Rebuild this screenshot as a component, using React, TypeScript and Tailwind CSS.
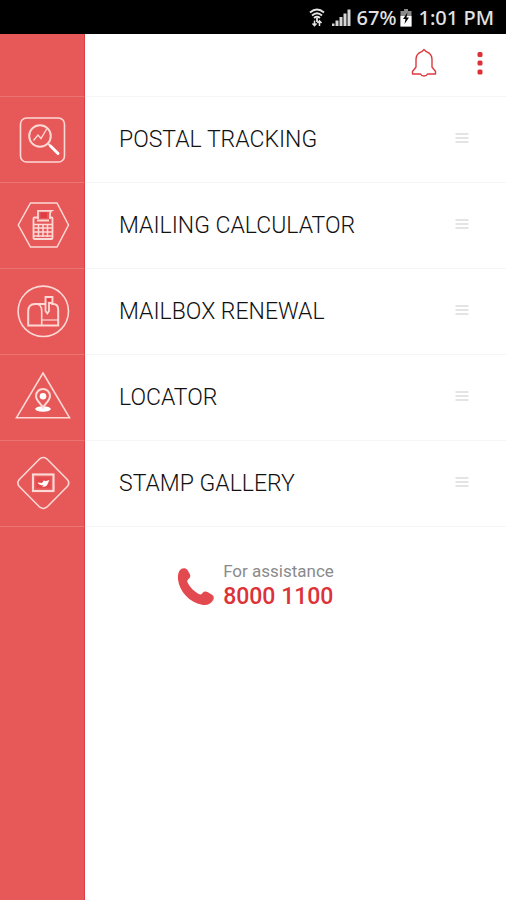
import React from 'react';

const TrackingIcon = () => (
  <svg viewBox="0 0 64 64" className="w-16 h-16" fill="none" stroke="#fdd9d6" strokeWidth="1.6" aria-hidden="true">
    <rect x="10.5" y="10" width="44" height="44" rx="6" />
    <circle cx="30" cy="28" r="10.8" strokeWidth="2" />
    <path d="M23.5 32.5l4.5-5.5 3 3.5 6-10" strokeWidth="1.4" />
    <path d="M38 35.5l2.5 2.5" strokeWidth="2" />
    <path d="M40.5 38l7.5 7.5" stroke="#fff" strokeWidth="3" strokeLinecap="round" />
  </svg>
);

const CalculatorIcon = () => (
  <svg viewBox="0 0 64 64" className="w-16 h-16" fill="none" stroke="#fdd9d6" strokeWidth="1.5" aria-hidden="true">
    <path d="M20.5 9h26.5L58.5 31 47 53H20.5L8.3 31z" />
    <path d="M28 25v-8.2h13.5c-1.5 1-1.5 2.6-1.5 4V25" strokeWidth="1.8" />
    <path d="M30.5 18.5H37V24h-6.5z" fill="#e03c42" stroke="none" />
    <path d="M28 23.5h-3.5q-1 0-1 1V44q0 1 1 1h17q1 0 1-1V24.5q0-1-1-1H40" strokeWidth="1.8" />
    <path d="M27 26.5h12" strokeWidth="2" />
    <path d="M24 30.5h18M24 34h18M24 38h18M24 42h18" />
    <path d="M28.5 30v13M33 30v13M37.5 30v13" />
  </svg>
);

const MailboxIcon = () => (
  <svg viewBox="0 0 64 64" className="w-16 h-16" fill="none" stroke="#fdd9d6" strokeWidth="1.6" aria-hidden="true">
    <circle cx="33.3" cy="31.3" r="25.2" />
    <path d="M35 24H25c-4.5 0-6.8 3-6.8 7v14.5h30V30c0-3.5-1.5-6-5-6h-2" strokeWidth="2" />
    <path d="M26 24c4 0 5.7 3 5.7 7v14" />
    <path d="M32 40h16" strokeWidth="1.2" />
    <path d="M35.5 31V17h7v6H39v8l-1.7 2.5z" strokeWidth="1.8" />
    <path d="M37 18.5h4V21h-4z" fill="#e03c42" stroke="none" />
  </svg>
);

const LocatorIcon = () => (
  <svg viewBox="0 0 64 64" className="w-16 h-16" fill="none" stroke="#fdd9d6" strokeWidth="1.6" aria-hidden="true">
    <path d="M33 7l26.5 44.7h-53z" />
    <ellipse cx="33" cy="43" rx="7.8" ry="2.8" fill="#fff" stroke="none" />
    <path d="M33 41.5c-2-4-7-6.8-7-11.5a7 7 0 0 1 14 0c0 4.7-5 7.5-7 11.5z" fill="#e75858" strokeWidth="2" />
    <circle cx="33" cy="30.3" r="3.3" fill="#fff" stroke="none" />
  </svg>
);

const StampIcon = () => (
  <svg viewBox="0 0 64 64" className="w-16 h-16" fill="none" stroke="#fdd9d6" strokeWidth="1.6" aria-hidden="true">
    <path d="M29.8 6.8q3.5-2.6 7 0L57.3 27.5q3 3.5 0 7L36.8 55.2q-3.5 2.6-7 0L9.3 34.5q-3-3.5 0-7z" />
    <rect x="23" y="22.5" width="20.5" height="16.5" strokeWidth="2.2" />
    <rect x="26" y="25.5" width="14.5" height="10.5" fill="#e34a4d" stroke="none" />
    <path d="M27.5 30.5l4.5.5 2-2.8 1.2 1 4.3-1.2-1.5 3c-.5 2.8-3 4.2-6 3.5 1-.3 1.5-.7 1.5-1.2-2.5.2-5-.8-6-2.8z" fill="#fff" stroke="none" />
  </svg>
);

const menuItems = [
  { label: 'POSTAL TRACKING', Icon: TrackingIcon },
  { label: 'MAILING CALCULATOR', Icon: CalculatorIcon },
  { label: 'MAILBOX RENEWAL', Icon: MailboxIcon },
  { label: 'LOCATOR', Icon: LocatorIcon },
  { label: 'STAMP GALLERY', Icon: StampIcon },
];

const StatusBar = () => (
  <div className="h-[34px] bg-black text-[#e2e2e2] flex items-center justify-end pr-3 pt-0.5 font-['Noto_Sans',sans-serif] text-xl font-medium">
    <svg viewBox="0 0 16 20" className="w-4 h-5 mr-1.5" fill="none" stroke="#e5e5e5" strokeWidth="1.8" aria-hidden="true">
      <path d="M1 4.5q7-6 14 0M3 7.5q5-4.5 10 0M5 10q3-2.5 6 0" />
      <path d="M8 10v4" />
      <path d="M5.5 12.5v5M3.5 15.5l2 2.2 2-2.2M10.500 18v-5M8.5 15l2-2.2 2 2.2" strokeWidth="1.5" />
    </svg>
    <svg viewBox="0 0 20 20" className="w-5 h-5 mr-1.5" fill="#d6d6d6" aria-hidden="true">
      <path d="M1 15.500h2.500V18H1zM4.500 12.500h3V18h-3zM8.500 9h3v9h-3zM12.500 5.500h3V18h-3zM16.500 1.500h3V18h-3z" />
    </svg>
    <span>67%</span>
    <svg viewBox="0 0 12 20" className="w-3 h-5 ml-1 mr-1.5" aria-hidden="true">
      <path d="M4 1h4v2h3.5v15.5H.5V3H4z" fill="#8a8a8a" />
      <path d="M.5 8h11v10.5H.5z" fill="#fff" />
      <path d="M7.5 4.5L3 11h2.5L4.5 16 9 9.5H6.5z" fill="#000" />
    </svg>
    <span>1:01 PM</span>
  </div>
);

export default function App() {
  return (
    <div className="min-h-screen flex flex-col bg-white font-[Roboto,sans-serif] text-[#111]">
      <StatusBar />

      <header className="flex h-[62px]">
        <div className="w-[85px] shrink-0 bg-[#e75858] border-r border-[#dc3e43]" />
        <div className="flex-1 flex items-center justify-end pr-1.5 pb-1">
          <button type="button" aria-label="Notifications" className="p-2">
            <svg viewBox="0 0 28 32" className="w-7 h-8" fill="none" stroke="#dc3a3f" strokeWidth="1.4" strokeLinejoin="round">
              <path d="M14 2.500l2.300 2.200c3.700 1.300 5.700 4.300 5.700 8v7.300l3.500 4.500v2.500h-8c-.5 1.300-1.800 2-3.500 2s-3-.7-3.500-2h-8v-2.500L6 20v-7.300c0-3.700 2-6.700 5.700-8z" />
            </svg>
          </button>
          <button type="button" aria-label="More options" className="p-2 ml-3.5">
            <svg viewBox="0 0 24 32" className="w-6 h-8" fill="#dc3036">
              <rect x="9.5" y="5" width="5" height="5" rx="1.5" />
              <rect x="9.5" y="13.5" width="5" height="5" rx="1.5" />
              <rect x="9.5" y="22.5" width="5" height="5" rx="1.5" />
            </svg>
          </button>
        </div>
      </header>

      <nav>
        {menuItems.map(({ label, Icon }) => (
          <a key={label} href="#" className="flex h-[86px]">
            <div className="w-[85px] shrink-0 bg-[#e75858] border-r border-r-[#dc3e43] border-t border-t-[#ea7271] flex justify-center items-center">
              <Icon />
            </div>
            <div className="flex-1 flex items-center justify-between pl-[34px] pr-9 border-t border-[#f5f5f5]">
              <span className="text-[23px] leading-7 font-light">{label}</span>
              <svg viewBox="0 0 16 16" className="w-4 h-4 mb-1" stroke="#dcdcdc" strokeWidth="1.5" aria-hidden="true">
                <path d="M1.5 4h13M1.5 8h13M1.5 12h13" />
              </svg>
            </div>
          </a>
        ))}
      </nav>

      <main className="flex-1 flex">
        <div className="w-[85px] shrink-0 bg-[#e75858] border-r border-r-[#dc3e43] border-t border-t-[#ea7271]" />
        <div className="flex-1 pt-8 pr-20 flex justify-center items-start border-t border-[#f5f5f5]">
          <a href="tel:80001100" className="flex items-center gap-2">
            <svg viewBox="0 0 38 40" className="w-[38px] h-10 mt-1" fill="#e34a4f" aria-hidden="true">
              <path d="M4.5 1.800C6.5.7 9 1 10.500 3l2.300 4c1 2 .5 3.800-1.500 5.300-1.200 1-1.300 2-.6 3.500 2.500 4.800 6.300 8.700 11 11.200 1.500.8 2.600.6 3.500-.6 1.500-2 3.300-2.400 5.300-1.300l4.500 2.700c2 1.300 2.300 3.200 1.200 5.200-2.400 4-6.200 5.800-11.200 4.800C12.500 35.500 2.500 24.500 1 12.500.5 7.500 1.500 3.800 4.500 1.800z" />
            </svg>
            <span className="flex flex-col">
              <span className="text-[17px] leading-6 text-[#8a8a8a]">For assistance</span>
              <span className="text-[23px] leading-7 font-medium text-[#dc3338]">8000 1100</span>
            </span>
          </a>
        </div>
      </main>
    </div>
  );
}
